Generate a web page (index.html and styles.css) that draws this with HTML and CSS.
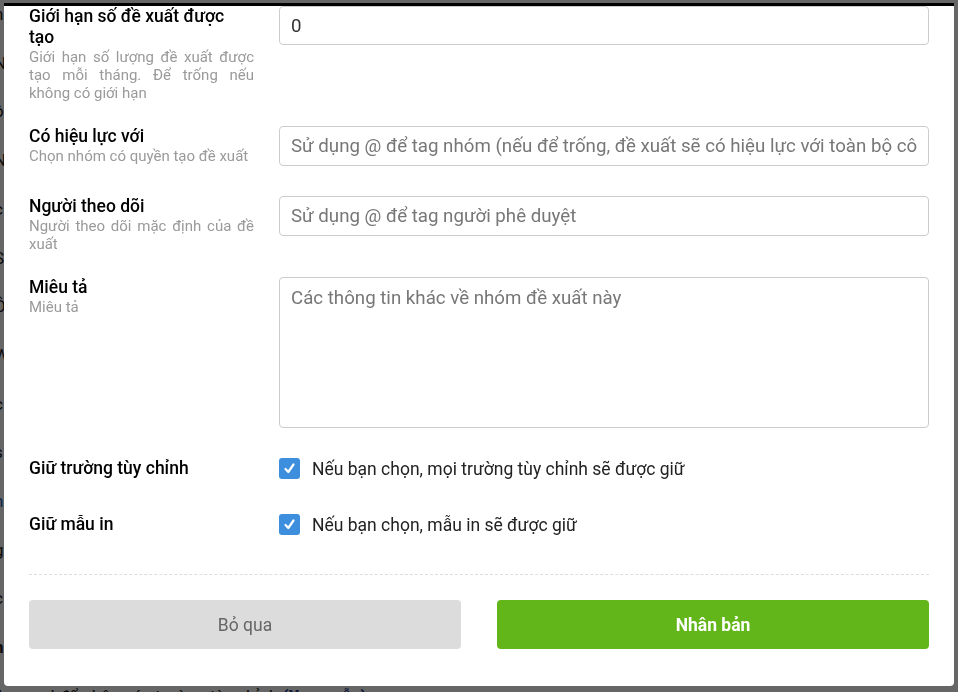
FILE: index.html
```html
<!DOCTYPE html>
<html lang="vi">
<head>
  <meta charset="UTF-8" />
  <title>Nhân bản nhóm đề xuất</title>
  <link rel="stylesheet" href="styles.css">
</head>
<body>

<!--  PAGE BEHIND THE MODAL  -->
<div class="page">
  <p>n</p>
  <p>N</p>
  <p>ô</p>
  <p>N</p>
  <p>c</p>
  <p>S</p>
  <p>Ô</p>
  <p>W</p>
  <p>c</p>
  <p>s</p>
  <p class="link">h</p>
  <p>g</p>
  <p>c</p>
  <p class="head">h</p>
  <p class="last">le excel để nhận các trường tùy chỉnh <b>(Xem mẫu)</b></p>
</div>
<div class="overlay"></div>

<!--  MODAL  -->
<div class="modal">
  <div class="modal-body">

    <div class="row">
      <div class="row-label">
        <div class="title">Giới hạn số đề xuất được tạo</div>
        <div class="hint">Giới hạn số lượng đề xuất được tạo mỗi tháng. Để trống nếu không có giới hạn</div>
      </div>
      <div class="row-field"><input type="text" value="0"></div>
    </div>

    <div class="row">
      <div class="row-label">
        <div class="title">Có hiệu lực với</div>
        <div class="hint">Chọn nhóm có quyền tạo đề xuất</div>
      </div>
      <div class="row-field"><input type="text" placeholder="Sử dụng @ để tag nhóm (nếu để trống, đề xuất sẽ có hiệu lực với toàn bộ công ty)"></div>
    </div>

    <div class="row">
      <div class="row-label">
        <div class="title">Người theo dõi</div>
        <div class="hint">Người theo dõi mặc định của đề xuất</div>
      </div>
      <div class="row-field"><input type="text" placeholder="Sử dụng @ để tag người phê duyệt"></div>
    </div>

    <div class="row">
      <div class="row-label">
        <div class="title">Miêu tả</div>
        <div class="hint">Miêu tả</div>
      </div>
      <div class="row-field"><textarea placeholder="Các thông tin khác về nhóm đề xuất này"></textarea></div>
    </div>

    <div class="row row-check">
      <div class="row-label"><div class="title">Giữ trường tùy chỉnh</div></div>
      <label class="check">
        <span class="box"><svg width="21" height="21" viewBox="0 0 21 21"><polyline points="6.5,11 9.3,14 14.5,6.5" fill="none" stroke="#fff" stroke-width="2.2" stroke-linecap="round" stroke-linejoin="round"/></svg></span>
        Nếu bạn chọn, mọi trường tùy chỉnh sẽ được giữ
      </label>
    </div>

    <div class="row row-check">
      <div class="row-label"><div class="title">Giữ mẫu in</div></div>
      <label class="check">
        <span class="box"><svg width="21" height="21" viewBox="0 0 21 21"><polyline points="6.5,11 9.3,14 14.5,6.5" fill="none" stroke="#fff" stroke-width="2.2" stroke-linecap="round" stroke-linejoin="round"/></svg></span>
        Nếu bạn chọn, mẫu in sẽ được giữ
      </label>
    </div>

    <div class="modal-footer">
      <button class="btn btn-cancel">Bỏ qua</button>
      <button class="btn btn-ok">Nhân bản</button>
    </div>

  </div>
</div>

</body>
</html>
```

FILE: styles.css
```css
/* ----------  GLOBAL  ---------- */
*{box-sizing:border-box}
html,body{margin:0;padding:0;font-family:Roboto,"Noto Sans",Arial,sans-serif;overflow:hidden}
body{background:#fff;color:#000}

/* ----------  PAGE BEHIND  ---------- */
.page{height:706px;display:flex;flex-direction:column;justify-content:space-between;padding-top:4px;font-size:17px;color:#222}
.page p{margin:0 0 0 -6px;white-space:nowrap}
.page .link{color:#1565c0}
.page .head{font-weight:700}
.page .last{margin-left:-2px}
.page .last b{color:#1a3d8f}
.overlay{position:fixed;inset:0;background:rgba(0,0,0,.6)}

/* ----------  MODAL  ---------- */
.modal{position:fixed;top:3px;left:4px;width:950px;height:683px;background:#fff;border-top:3px solid #000;border-radius:0 0 4px 4px;overflow:hidden}
.modal-body{padding:0 25px}

.row{display:flex;gap:25px;margin-bottom:24px}
.row-label{width:225px;flex-shrink:0}
.row-field{flex:1}
.title{font-size:17.5px;font-weight:500;line-height:21px;color:#000;padding-right:12px}
.hint{font-size:15px;line-height:18px;color:#9a9a9a;text-align:justify}

input,textarea{display:block;width:100%;margin-bottom:6px;border:1px solid #ccc;border-radius:4px;font-family:inherit;font-size:18.7px;color:#333;background:#fff}
input{height:40px;padding:0 11px}
.row:first-child input{height:39px}
textarea{height:151px;padding:9px 11px;resize:none;line-height:22px}
input::placeholder,textarea::placeholder{color:#777}

.row-check{height:32px}
.check{display:flex;align-items:center;gap:12px;height:21px;font-size:17.5px;color:#222}
.box{width:21px;height:21px;border-radius:3px;background:#3e8ede;display:block}
.box svg{display:block}

/* ----------  FOOTER  ---------- */
.modal-footer{display:flex;gap:36px;margin-top:28px;border-top:1px dashed #ddd;padding-top:25px}
.btn{flex:1;height:49px;border:none;border-radius:4px;font-family:inherit;font-size:17.5px;cursor:pointer}
.btn-cancel{background:#dcdcdc;color:#666}
.btn-ok{background:#63b619;color:#fff;font-weight:700}
```
